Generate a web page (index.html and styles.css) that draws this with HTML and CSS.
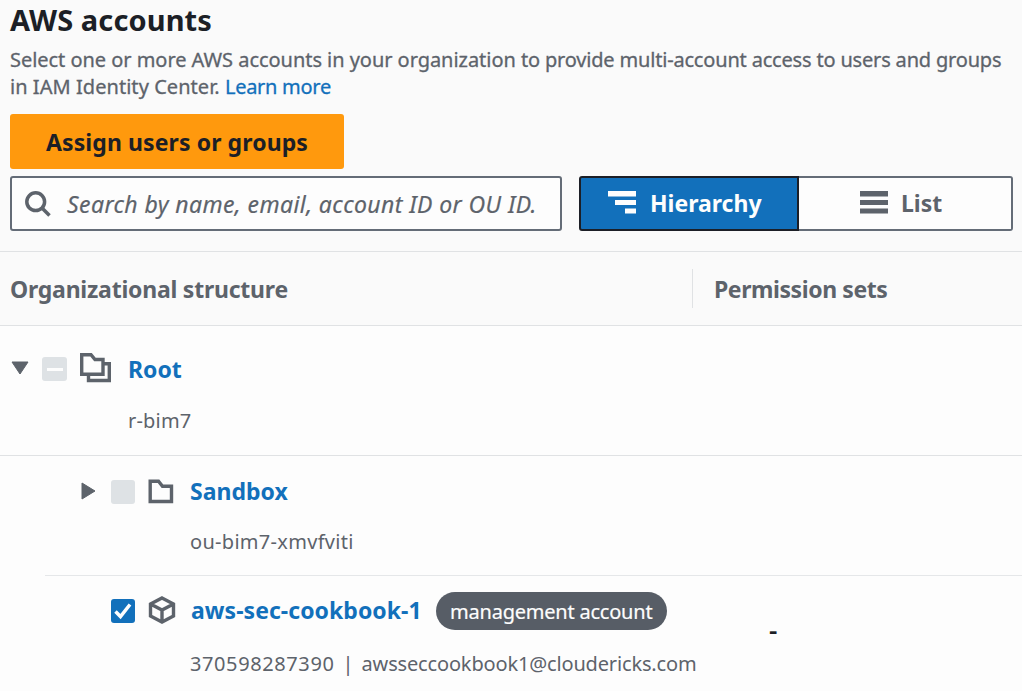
FILE: index.html
```html
<!DOCTYPE html>
<html lang="en">
<head>
<meta charset="utf-8">
<title>AWS accounts</title>
<link rel="stylesheet" href="styles.css">
</head>
<body>
<header class="panel-header">
  <h1 class="title"><span>AWS accounts</span></h1>
  <p class="description"><span class="desc-lead">Select one or more AWS accounts in your organization </span><span class="desc-one">to provide multi-account access to users and groups</span><br><span class="desc-two">in IAM Identity Center. </span><a class="learn">Learn more</a></p>
  <button class="assign"><span>Assign users or groups</span></button>
  <div class="toolbar">
    <div class="search">
      <svg class="search-icon" width="28" height="28" viewBox="0 0 28 28"><circle cx="11.7" cy="11.7" r="8.9"/><path d="M18 18l7.5 7.5"/></svg>
      <span class="placeholder">Search by name, email, account ID or OU ID.</span>
    </div>
    <div class="segments">
      <div class="segment selected">
        <svg width="28" height="23" viewBox="0 0 28 23"><path d="M0 0h28v5.500H0zM7 9h21v5H7zM17 17.500h11v5H17z"/></svg>
        <span class="hierarchy">Hierarchy</span>
      </div>
      <div class="segment unselected">
        <svg width="28" height="23" viewBox="0 0 28 23"><path d="M0 0h28v5.500H0zM0 9h28v5H0zM0 17.500h28v5H0z"/></svg>
        <span class="list">List</span>
      </div>
    </div>
  </div>
</header>
<div class="columns">
  <div class="column-org"><span>Organizational structure</span></div>
  <div class="column-perm"><span>Permission sets</span></div>
</div>
<main class="tree">
  <section class="row root">
    <div class="line">
      <svg class="caret" width="18" height="14" viewBox="0 0 18 14"><path d="M1 1h16L9 13z"/></svg>
      <span class="check indeterminate"></span>
      <svg class="icon folders" width="32" height="30" viewBox="0 0 32 30"><path d="M1.700 1.700h9.300l4 4.800h8v14.800H1.700z"/><path d="M24 10.800h5.300v16.700H8.500v-5"/></svg>
      <a class="name">Root</a>
    </div>
    <div class="detail"><span class="root-id">r-bim7</span></div>
  </section>
  <section class="row sandbox">
    <div class="line">
      <svg class="caret" width="15" height="18" viewBox="0 0 15 18"><path d="M1 1v16l13-8z"/></svg>
      <span class="check disabled"></span>
      <svg class="icon folder" width="26" height="25" viewBox="0 0 26 25"><path d="M2.200 2.200h8.300l4 5h9v15.300H2.200z"/></svg>
      <a class="name">Sandbox</a>
    </div>
    <div class="detail"><span class="ou-id">ou-bim7-xmvfviti</span></div>
  </section>
  <section class="row account">
    <div class="account-info">
      <div class="line">
        <span class="check checked"><svg width="24" height="24" viewBox="0 0 24 24"><path d="M4.500 12.500l5 5L19 5.500"/></svg></span>
        <svg class="icon cube" width="28" height="28" viewBox="0 0 28 28"><path d="M14 2l11.500 6v12L14 26 2.500 20V8zM2.500 8L14 14l11.500-6M14 14v12"/></svg>
        <a class="name">aws-sec-cookbook-1</a>
        <span class="badge"><span>management account</span></span>
      </div>
      <div class="detail"><span class="acct">370598287390</span><span class="pipe">|</span><span class="email">awsseccookbook1@cloudericks.com</span></div>
    </div>
    <div class="permission">-</div>
  </section>
</main>
</body>
</html>
```

FILE: styles.css
```css
* { box-sizing: border-box; }
body {
  margin: 0;
  width: 1022px;
  height: 691px;
  overflow: hidden;
  background: #fdfdfd;
  color: #5d636b;
  font-family: "Noto Sans", "Open Sans", sans-serif;
  font-size: 20px;
  white-space: nowrap;
}
a { color: #1270bb; }
.panel-header {
  height: 252px;
  padding: 0 9px 0 10px;
  background: #fafafa;
  border-bottom: 1px solid #e0e2e4;
}
.title {
  margin: 0;
  height: 46px;
  line-height: 40px;
  font-size: 29px;
  letter-spacing: 0.1px;
  color: #1c1f26;
}
.description {
  margin: 0;
  height: 68px;
  line-height: 27px;
  -webkit-text-stroke: 0.3px;
}
.desc-lead { letter-spacing: -0.04px; }
.desc-one { letter-spacing: -0.18px; }
.desc-two { letter-spacing: 0.05px; }
.learn { letter-spacing: -0.28px; }
.assign {
  display: flex;
  align-items: center;
  justify-content: center;
  width: 334px;
  height: 55px;
  padding: 0;
  border: 0;
  border-radius: 3px;
  background: #ff990d;
  color: #1c1f26;
  font: bold 23px "Noto Sans", sans-serif;
  letter-spacing: 0.1px;
}
.toolbar {
  display: flex;
  justify-content: space-between;
  margin-top: 7px;
}
.search {
  display: flex;
  align-items: center;
  width: 552px;
  height: 55px;
  padding-left: 12px;
  border: 2px solid #646c77;
  border-radius: 3px;
  background: #fdfdfd;
}
.search-icon {
  margin-right: 15px;
  fill: none;
  stroke: #5d636b;
  stroke-width: 3.500;
}
.placeholder {
  font-style: italic;
  font-size: 23px;
  letter-spacing: 0.41px;
  -webkit-text-stroke: 0.2px;
}
.segments { display: flex; width: 434px; height: 55px; }
.segment {
  display: flex;
  align-items: center;
  gap: 14px;
  padding-bottom: 2px;
  font-size: 23px;
  font-weight: bold;
  border: 2px solid #646c77;
}
.segment svg { fill: currentColor; }
.selected {
  width: 220px;
  padding-left: 27px;
  background: #1270bb;
  border-color: #1c1f26;
  border-radius: 3px 0 0 3px;
  color: #fdfdfd;
}
.unselected {
  flex: 1;
  gap: 13px;
  padding-left: 61px;
  background: #fdfdfd;
  border-left: 0;
  border-radius: 0 3px 3px 0;
}
.columns {
  display: flex;
  align-items: center;
  height: 74px;
  padding-left: 10px;
  background: #fafafa;
  border-bottom: 1px solid #e0e2e4;
  font-size: 23px;
  font-weight: bold;
}
.column-org { width: 682px; letter-spacing: -0.23px; }
.column-perm {
  height: 39px;
  line-height: 40px;
  padding-left: 21px;
  border-left: 1px solid #e0e2e4;
  letter-spacing: -0.42px;
}
.line { display: flex; align-items: center; height: 38px; }
.name { font-size: 23px; font-weight: bold; }
.caret { fill: #5d636b; stroke: #5d636b; stroke-width: 1; stroke-linejoin: round; }
.icon { fill: none; stroke: #5d636b; stroke-width: 3.400; }
.check {
  display: flex;
  width: 24px;
  height: 24px;
  border-radius: 3px;
  background: #dee2e5;
}
.indeterminate { align-items: center; justify-content: center; }
.indeterminate::after { content: ""; width: 16px; height: 3px; background: #fdfdfd; }
.checked { background: #1270bb; }
.checked path { fill: none; stroke: #fdfdfd; stroke-width: 3.500; }
.detail { display: flex; align-items: center; height: 30px; }
.root { height: 130px; padding: 24px 0 0 11px; border-bottom: 1px solid #e0e2e4; }
.root .caret { margin-bottom: 2px; }
.root .check { width: 25px; margin: 0 13px; }
.folders { margin: 0 16px 3px 0; }
.root .detail { margin: 17px 0 0 117px; letter-spacing: 0.2px; }
.sandbox { height: 120px; margin-left: 45px; padding: 17px 0 0 36px; border-bottom: 1px solid #e5e7e9; }
.sandbox .caret { margin-bottom: 3px; }
.sandbox .check { margin: 0 13px 0 15px; }
.sandbox .name { padding-bottom: 2px; }
.folder { margin: 0 16px 2px 0; }
.sandbox .detail { margin: 15px 0 0 109px; letter-spacing: 0.3px; }
.account { display: flex; padding: 16px 0 0 111px; }
.account-info { width: 658px; }
.account .name { margin-left: -1px; padding-bottom: 2px; letter-spacing: 0.05px; }
.cube { margin: 0 16px 2px 13px; }
.badge {
  display: flex;
  align-items: center;
  justify-content: center;
  width: 231px;
  height: 38px;
  margin-left: 14px;
  border-radius: 19px;
  background: #575d66;
  color: #fdfdfd;
  letter-spacing: -0.22px;
  -webkit-text-stroke: 0.2px;
}
.account .detail { margin: 18px 0 0 79px; }
.acct { letter-spacing: 0.6px; }
.pipe { margin: 0 8px; }
.email { letter-spacing: -0.16px; }
.permission {
  padding-top: 24px;
  color: #1c1f26;
  font-size: 26px;
  font-weight: 600;
  line-height: 27px;
}
```
